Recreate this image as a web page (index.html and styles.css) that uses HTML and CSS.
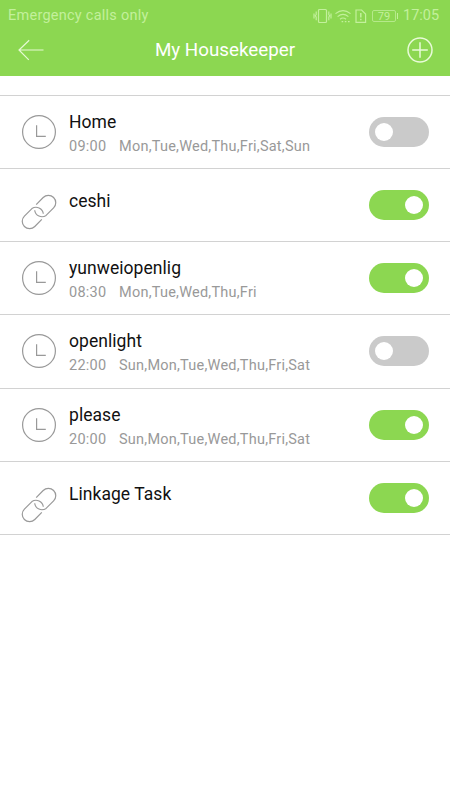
FILE: index.html
```html
<!DOCTYPE html>
<html lang="en">
<head>
<meta charset="utf-8">
<title>My Housekeeper</title>
<link rel="stylesheet" href="styles.css">
</head>
<body>
<svg width="0" height="0" class="defs">
  <symbol id="clock" viewBox="0 0 36 36"><circle cx="18" cy="18" r="16.4"/><path d="M15.6 11.2v11.1h9.2"/></symbol>
  <symbol id="link" viewBox="0 0 36 36"><path d="M22.3 19.8A7.3 7.3 0 0 0 10.9 14.6L3.4 22.1A7.3 7.3 0 0 0 13.8 32.5L20.8 25.3"/><path d="M13.7 16.2A7.3 7.3 0 0 0 25.1 21.4L32.6 13.9A7.3 7.3 0 0 0 22.2 3.5L15.2 10.7"/></symbol>
</svg>
<header class="header">
  <div class="status">
    <span class="carrier">Emergency calls only</span>
    <svg class="indicators" width="54" height="16" viewBox="0 0 54 16">
      <rect x="5.5" y="1.5" width="8" height="13" rx="1"/>
      <path d="M3.2 3.5v3l-.8 1.3.8 1.4v3M15.8 3.5v3l.8 1.3-.8 1.4v3M1 5.5v5M18 5.5v5"/>
      <path d="M22.5 5.6q7.5-6 15 0M24.6 8.6q5.4-4.4 10.8 0M27 11.3q3-2.6 6 0"/>
      <path d="M28.6 13.7h1.6M31.8 13.7h1.6M35 13.7h1.6"/>
      <path d="M43 2h5.6l4 4v8.3H43z"/><path d="M47.8 5v4.4M47.8 10.8v1.5" stroke-width="1.5"/>
    </svg>
    <span class="battery">79</span>
    <span class="time">17:05</span>
  </div>
  <div class="bar">
    <svg class="back" width="26" height="22" viewBox="0 0 26 22"><path d="M11.2 1.2L1 11l9.8 9.8M1 11h24.5"/></svg>
    <h1 class="title">My Housekeeper</h1>
    <svg class="add" width="28" height="28" viewBox="0 0 28 28"><circle cx="14" cy="14" r="12"/><path d="M14 6.2v15.6M6.2 14h15.6"/></svg>
  </div>
</header>
<main class="list">
  <section class="row">
    <svg class="icon"><use href="#clock"/></svg>
    <div class="info"><div class="name">Home</div><div class="detail"><span class="at">09:00</span><span>Mon,Tue,Wed,Thu,Fri,Sat,Sun</span></div></div>
    <span class="toggle"></span>
  </section>
  <section class="row linkage">
    <svg class="icon"><use href="#link"/></svg>
    <div class="info"><div class="name">ceshi</div></div>
    <span class="toggle on"></span>
  </section>
  <section class="row">
    <svg class="icon"><use href="#clock"/></svg>
    <div class="info"><div class="name">yunweiopenlig</div><div class="detail"><span class="at">08:30</span><span>Mon,Tue,Wed,Thu,Fri</span></div></div>
    <span class="toggle on"></span>
  </section>
  <section class="row">
    <svg class="icon"><use href="#clock"/></svg>
    <div class="info"><div class="name">openlight</div><div class="detail"><span class="at">22:00</span><span>Sun,Mon,Tue,Wed,Thu,Fri,Sat</span></div></div>
    <span class="toggle"></span>
  </section>
  <section class="row">
    <svg class="icon"><use href="#clock"/></svg>
    <div class="info"><div class="name">please</div><div class="detail"><span class="at">20:00</span><span>Sun,Mon,Tue,Wed,Thu,Fri,Sat</span></div></div>
    <span class="toggle on"></span>
  </section>
  <section class="row linkage">
    <svg class="icon"><use href="#link"/></svg>
    <div class="info"><div class="name">Linkage Task</div></div>
    <span class="toggle on"></span>
  </section>
</main>
</body>
</html>
```
FILE: styles.css
```css
* { box-sizing: border-box; }
body {
  margin: 0;
  height: 800px;
  overflow: hidden;
  background: #fff;
  font-family: Roboto, "Liberation Sans", sans-serif;
}
.defs { display: block; }
svg {
  flex: none;
  fill: none;
  stroke-width: 1.2;
}
.header {
  height: 76px;
  background: #8cd751;
}
.status {
  display: flex;
  align-items: center;
  height: 31px;
  padding: 0 10px 0 8px;
  color: #c3f09c;
  font-size: 14.5px;
  line-height: 32px;
}
.carrier {
  flex: 1;
  letter-spacing: 0.25px;
}
.indicators {
  margin-right: 5px;
  stroke: #c3f09c;
}
.battery {
  position: relative;
  width: 24px;
  height: 12px;
  margin-right: 7px;
  border: 1px solid #b5e98a;
  border-radius: 2px;
  font-size: 11px;
  line-height: 11px;
  text-align: center;
}
.battery::after {
  content: "";
  position: absolute;
  top: 2px;
  right: -3px;
  width: 1px;
  height: 6px;
  background: #c3f09c;
}
.time { width: 37px; white-space: nowrap; }
.bar {
  display: flex;
  align-items: center;
  justify-content: space-between;
  height: 38px;
  padding: 0 16px 0 18px;
}
.back { stroke: #e6fad4; }
.title {
  margin: 0;
  color: #fff;
  font-size: 18.8px;
  font-weight: 400;
  line-height: 38px;
}
.add {
  stroke: #e8fbd8;
  stroke-width: 1.5;
}
.list {
  margin-top: 19px;
  border-top: 1px solid #d2d2d2;
}
.row {
  display: flex;
  height: 73.15px;
  padding: 0 21px;
  border-bottom: 1px solid #d2d2d2;
}
.icon {
  width: 36px;
  height: 36px;
  margin-top: 18px;
  stroke: #999;
}
.info {
  flex: 1;
  padding: 14px 0 0 12px;
}
.row .icon { margin-left: 0.4px; margin-right: -0.4px; }
.name {
  color: #111;
  font-size: 17.5px;
  letter-spacing: 0.05px;
  line-height: 24px;
}
.detail {
  display: flex;
  gap: 12px;
  margin-top: 2px;
  color: #999;
  font-size: 14.5px;
  letter-spacing: 0.23px;
  line-height: 22px;
}
.at { width: 38px; }
.linkage .icon { margin-top: 25px; }
.linkage .info { padding-top: 20px; }
.toggle {
  display: flex;
  align-items: center;
  width: 60px;
  height: 30px;
  margin-top: 21px;
  padding: 0 6px;
  border-radius: 15px;
  background: #cacaca;
}
.toggle::before {
  content: "";
  width: 18px;
  height: 18px;
  border-radius: 50%;
  background: #fff;
}
.toggle.on {
  justify-content: flex-end;
  background: #8cd751;
}
```
